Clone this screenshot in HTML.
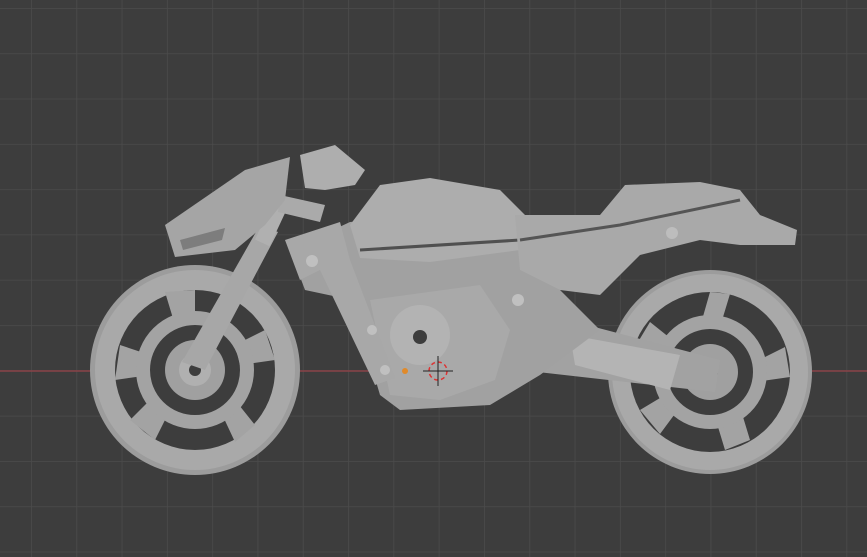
<!DOCTYPE html>
<html><head><style>
html,body{margin:0;padding:0;background:#3d3d3d;width:867px;height:557px;overflow:hidden}
</style></head><body>
<svg width="867" height="557" viewBox="0 0 867 557" xmlns="http://www.w3.org/2000/svg">
<defs>
<pattern id="g" x="31" y="8" width="45.3" height="45.3" patternUnits="userSpaceOnUse">
<path d="M0 0V45.3M0 0H45.3" stroke="#4b4b4b" stroke-width="1.6" fill="none"/>
</pattern>
</defs>
<rect width="867" height="557" fill="#3d3d3d"/>
<rect width="867" height="557" fill="url(#g)"/>
<line x1="0" y1="371" x2="867" y2="371" stroke="#8a4348" stroke-width="1.5"/>

<!-- rear wheel -->
<g transform="translate(710,372)">
<circle r="102" fill="#9c9c9c"/>
<circle r="98" fill="#a9a9a9"/>
<circle r="80" fill="#3d3d3d"/>
<path d="M0-80 L20-78 L10-45 L-10-45 Z M75-25 L80 5 L45 10 L45-10Z M40 68 L15 78 L5 45 L30 35Z M-50 62 L-70 38 L-40 20 L-30 35Z M-78-20 L-60-50 L-35-30 L-45-10Z" fill="#a3a3a3"/>
<circle r="50" fill="none" stroke="#a3a3a3" stroke-width="14"/>
<circle r="28" fill="#a0a0a0"/>
<circle r="8" fill="#3d3d3d"/>
</g>
<!-- swingarm -->
<path d="M495 335 L530 310 L720 360 L715 392 L520 370 Z" fill="#a2a2a2"/>
<path d="M570 335 L680 355 L670 390 L575 365Z" fill="#b4b4b4"/>
<circle cx="515" cy="345" r="6" fill="#3d3d3d"/>

<!-- front wheel -->
<g transform="translate(195,370)">
<circle r="105" fill="#9c9c9c"/>
<circle r="100" fill="#a9a9a9"/>
<circle r="80" fill="#3d3d3d"/>
<path d="M-30-78 L0-80 L0-45 L-20-45Z M70-40 L80-10 L45-5 L40-25Z M60 55 L40 72 L25 40 L40 30Z M-40 70 L-65 50 L-40 25 L-25 40Z M-80 10 L-75-25 L-45-15 L-45 5Z" fill="#a3a3a3"/>
<circle r="52" fill="none" stroke="#a3a3a3" stroke-width="14"/>
<circle r="30" fill="#a0a0a0"/>
<circle r="16" fill="#b0b0b0"/>
<circle r="6" fill="#3d3d3d"/>
</g>
<!-- fork -->
<path d="M182 362 L260 225 L278 232 L205 370Z" fill="#a7a7a7"/>
<rect x="264" y="200" width="16" height="45" fill="#b0b0b0" transform="rotate(25 272 222)"/>
<path d="M280 195 L325 205 L320 222 L278 212Z" fill="#aaaaaa"/>
<path d="M300 155 L335 145 L365 170 L355 185 L325 190 L305 188Z" fill="#aeaeae"/>

<!-- headlight fairing -->
<path d="M165 225 L245 170 L290 157 L285 200 L265 225 L235 250 L175 257 Z" fill="#a5a5a5"/>
<path d="M180 240 L225 228 L222 240 L183 250Z" fill="#7d7d7d"/>

<!-- frame / engine -->
<path d="M290 250 L350 222 L520 210 L560 290 L600 330 L540 375 L490 405 L400 410 L380 395 L352 300 L305 290Z" fill="#a1a1a1"/>
<path d="M370 300 L480 285 L510 330 L495 380 L440 400 L390 395 Z" fill="#a9a9a9"/>
<circle cx="420" cy="335" r="30" fill="#b3b3b3"/>
<circle cx="420" cy="337" r="7" fill="#3d3d3d"/>
<path d="M285 240 L340 222 L350 260 L395 378 L375 385 L320 270 L300 280Z" fill="#a8a8a8"/>
<circle cx="312" cy="261" r="6" fill="#c0c0c0"/>
<circle cx="372" cy="330" r="5" fill="#c0c0c0"/>
<circle cx="385" cy="370" r="5" fill="#c0c0c0"/>
<circle cx="518" cy="300" r="6" fill="#c0c0c0"/>

<!-- tank -->
<path d="M350 225 L380 185 L430 178 L500 190 L525 215 L520 250 L430 262 L360 258Z" fill="#adadad"/>
<path d="M360 250 L520 240" stroke="#505050" stroke-width="3"/>
<!-- seat / tail -->
<path d="M515 215 L600 215 L625 185 L700 182 L740 190 L760 215 L797 230 L795 245 L740 245 L700 240 L640 255 L600 295 L560 290 L520 270Z" fill="#a9a9a9"/>
<path d="M520 240 L620 225 L740 200" stroke="#555" stroke-width="3" fill="none"/>
<circle cx="672" cy="233" r="6" fill="#bdbdbd"/>

<!-- origin + cursor -->
<circle cx="405" cy="371" r="3" fill="#e08a2a"/>
<circle cx="438" cy="371" r="9" fill="none" stroke="#d33" stroke-width="1.5" stroke-dasharray="4 3"/>
<path d="M438 356V386M423 371H453" stroke="#222" stroke-width="1"/>
</svg>
</body></html>
